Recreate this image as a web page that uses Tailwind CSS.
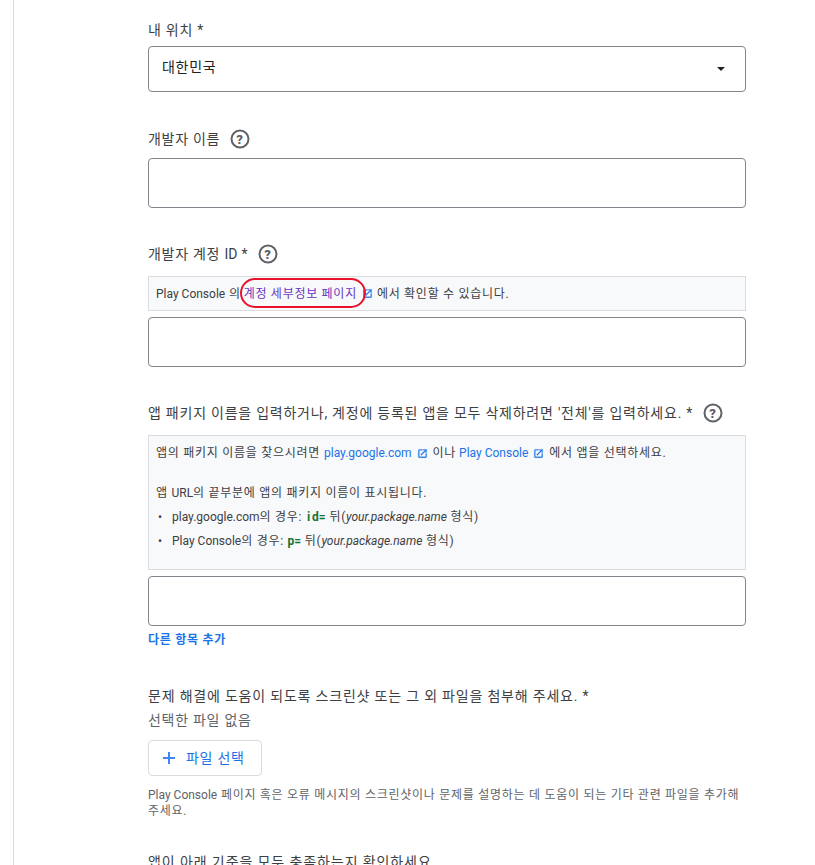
<!DOCTYPE html>
<html lang="ko">
<head>
<meta charset="utf-8">
<script src="https://cdn.jsdelivr.net/npm/@tailwindcss/browser@4"></script>
</head>
<body class="bg-white overflow-hidden font-['Roboto','Noto_Sans_CJK_KR',sans-serif] text-[#3c4043] tracking-[0.72px]">
<div class="h-[865px] overflow-hidden ml-[13px] border-l border-[#dadce0]">
  <div class="w-[598px] ml-[134px] pt-[20px]">

    <div class="h-5 text-[14px] leading-5">내 위치 *</div>
    <div class="mt-[6px] h-[46px] rounded border border-[#80868b] flex items-center justify-between pl-[13px] pr-[20px] text-[14px] text-[#202124]">
      <span class="pb-[3px]">대한민국</span>
      <span class="w-0 h-0 border-x-[4px] border-x-transparent border-t-[4px] border-t-[#202124]"></span>
    </div>

    <div class="mt-[37px] h-5 flex items-center text-[14px] leading-5">개발자 이름
      <svg class="ml-[10px]" width="20" height="20" viewBox="0 0 20 20"><circle cx="10" cy="10" r="8.5" fill="none" stroke="#5f6368" stroke-width="2"/><text x="10" y="14.6" text-anchor="middle" font-size="13" font-weight="900" font-family="Roboto" fill="#5f6368">?</text></svg>
    </div>
    <div class="mt-[9px] h-[50px] rounded border border-[#80868b]"></div>

    <div class="mt-[36px] h-5 flex items-center text-[14px] leading-5"><span>개발자 계정 <span class="tracking-normal">ID</span> *</span>
      <svg class="ml-[10px]" width="20" height="20" viewBox="0 0 20 20"><circle cx="10" cy="10" r="8.5" fill="none" stroke="#5f6368" stroke-width="2"/><text x="10" y="14.6" text-anchor="middle" font-size="13" font-weight="900" font-family="Roboto" fill="#5f6368">?</text></svg>
    </div>
    <div class="relative mt-[12px] h-[35px] bg-[#f8f9fa] border border-[#dadce0] flex items-center pl-[7px] text-[12px] whitespace-nowrap">
      <span><span class="tracking-normal">Play Console</span> 의</span>
      <span class="ml-[3px] text-[#6b34c0]">계정 세부정보 페이지</span>
      <svg class="ml-[5px]" width="11" height="11" viewBox="0 0 24 24" fill="#1a73e8" stroke="#1a73e8" stroke-width="0.6"><path d="M19 19H5V5h7V3H5a2 2 0 0 0-2 2v14a2 2 0 0 0 2 2h14a2 2 0 0 0 2-2v-7h-2v7zM14 3v2h3.59l-9.83 9.83 1.41 1.41L19 6.41V10h2V3h-7z"/></svg>
      <span class="ml-[4px]">에서 확인할 수 있습니다.</span>
      <div class="absolute left-[91px] top-[1px] w-[126px] h-[30px] rounded-[15px] border-2 border-[#e8132b]"></div>
    </div>
    <div class="mt-[6px] h-[50px] rounded border border-[#80868b]"></div>

    <div class="mt-[36px] h-5 flex items-center text-[14px] leading-5 whitespace-nowrap tracking-[0.76px]">앱 패키지 이름을 입력하거나, 계정에 등록된 앱을 모두 삭제하려면 '전체'를 입력하세요. *
      <svg class="ml-[10px]" width="20" height="20" viewBox="0 0 20 20"><circle cx="10" cy="10" r="8.5" fill="none" stroke="#5f6368" stroke-width="2"/><text x="10" y="14.6" text-anchor="middle" font-size="13" font-weight="900" font-family="Roboto" fill="#5f6368">?</text></svg>
    </div>
    <div class="mt-[12px] h-[135px] bg-[#f8f9fa] border border-[#dadce0] pl-[7px] pt-[7px] text-[12px] leading-5 whitespace-nowrap">
      <div class="flex items-center h-5">
        <span>앱의 패키지 이름을 찾으시려면</span>
        <span class="ml-[4px] text-[#1a73e8] tracking-normal">play.google.com</span>
        <svg class="ml-[5px]" width="11" height="11" viewBox="0 0 24 24" fill="#1a73e8" stroke="#1a73e8" stroke-width="0.6"><path d="M19 19H5V5h7V3H5a2 2 0 0 0-2 2v14a2 2 0 0 0 2 2h14a2 2 0 0 0 2-2v-7h-2v7zM14 3v2h3.59l-9.83 9.83 1.41 1.41L19 6.41V10h2V3h-7z"/></svg>
        <span class="ml-[5px]">이나</span>
        <span class="ml-[3px] text-[#1a73e8] tracking-normal">Play Console</span>
        <svg class="ml-[5px]" width="11" height="11" viewBox="0 0 24 24" fill="#1a73e8" stroke="#1a73e8" stroke-width="0.6"><path d="M19 19H5V5h7V3H5a2 2 0 0 0-2 2v14a2 2 0 0 0 2 2h14a2 2 0 0 0 2-2v-7h-2v7zM14 3v2h3.59l-9.83 9.83 1.41 1.41L19 6.41V10h2V3h-7z"/></svg>
        <span class="ml-[5px]">에서 앱을 선택하세요.</span>
      </div>
      <div class="mt-[20px] h-5">앱 <span class="tracking-normal">URL</span>의 끝부분에 앱의 패키지 이름이 표시됩니다.</div>
      <ul class="mt-[4px] flex flex-col gap-[4px]">
        <li class="flex h-5"><span class="w-[16px] pl-[2px]">•</span><span><span class="tracking-normal">play.google.com</span>의 경우: <b class="ml-[1px] font-bold text-[#137333] tracking-normal"><span class="tracking-[2px]">i</span>d=</b> 뒤(<i class="tracking-normal">your.package.name</i> 형식)</span></li>
        <li class="flex h-5"><span class="w-[16px] pl-[2px]">•</span><span><span class="tracking-normal">Play Console</span>의 경우: <b class="font-bold text-[#137333] tracking-normal">p=</b> 뒤(<i class="tracking-normal">your.package.name</i> 형식)</span></li>
      </ul>
    </div>
    <div class="mt-[6px] h-[50px] rounded border border-[#80868b]"></div>
    <div class="mt-[4px] h-5 text-[12px] leading-5 font-bold text-[#1a73e8]">다른 항목 추가</div>

    <div class="mt-[36px] h-5 text-[14px] leading-5 tracking-[0.8px]">문제 해결에 도움이 되도록 스크린샷 또는 그 외 파일을 첨부해 주세요. *</div>
    <div class="mt-[4px] h-5 text-[14px] leading-5 text-[#5f6368]">선택한 파일 없음</div>
    <div class="mt-[10px] w-[114px] h-[36px] rounded border border-[#dadce0] flex items-center pl-[13px] text-[14px] text-[#1a73e8]">
      <svg width="14" height="14" viewBox="0 0 14 14" fill="#4285f4"><path d="M6 1h2v5h5v2H8v5H6V8H1V6h5z"/></svg>
      <span class="ml-[10px]">파일 선택</span>
    </div>
    <p class="mt-[11px] text-[12px] leading-4 text-[#5f6368]"><span class="tracking-normal">Play Console</span> 페이지 혹은 오류 메시지의 스크린샷이나 문제를 설명하는 데 도움이 되는 기타 관련 파일을 추가해 주세요.</p>

    <div class="mt-[33px] h-5 text-[14px] leading-5 tracking-[0.9px]">앱이 아래 기준을 모두 충족하는지 확인하세요.</div>
  </div>
</div>
</body>
</html>
